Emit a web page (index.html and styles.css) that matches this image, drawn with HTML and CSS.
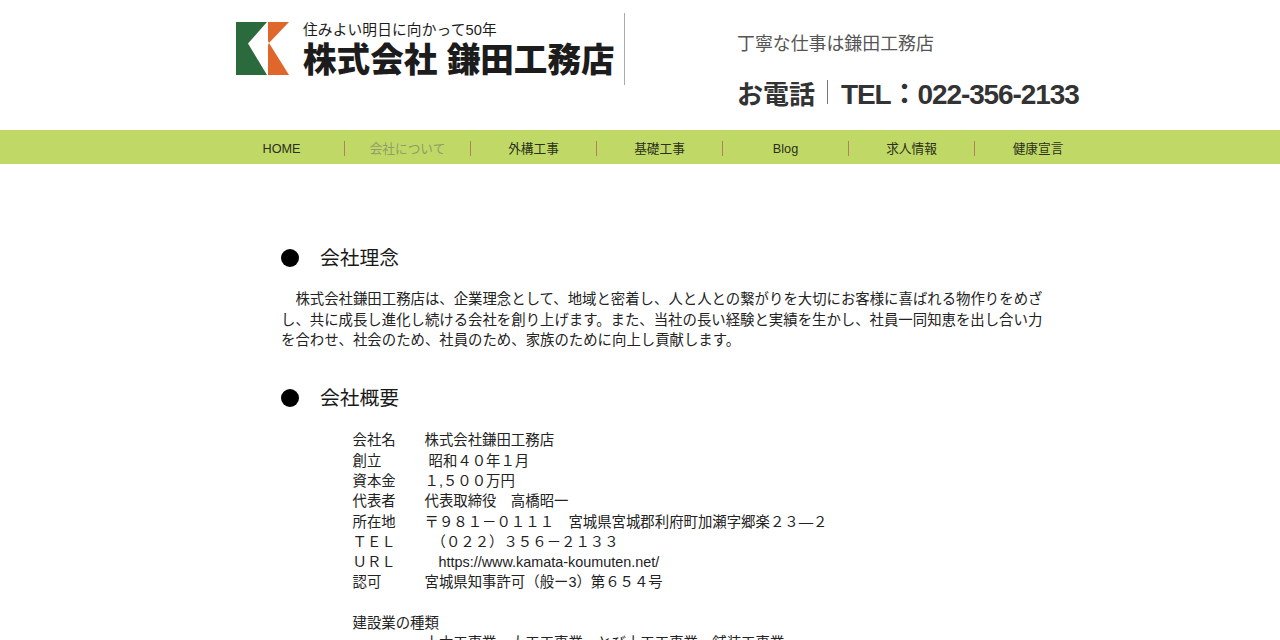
FILE: index.html
```html
<!DOCTYPE html>
<html lang="ja">
<head>
<meta charset="utf-8">
<title>株式会社鎌田工務店</title>
<link rel="stylesheet" href="styles.css">
</head>
<body>
<header class="site-header">
  <div class="logo">
    <svg class="logo-mark" viewBox="0 0 53 53" width="53" height="53" aria-hidden="true">
      <polygon points="0,0 31,0 12,21.500 31,53 0,53" fill="#2b6a3c"/>
      <polygon points="32,0 53,0 33,21 53,53 32,53 32,23 33,21 32,19" fill="#e0672c"/>
    </svg>
    <div class="logo-text">
      <div class="logo-tag">住みよい明日に向かって50年</div>
      <div class="logo-name">株式会社 鎌田工務店</div>
    </div>
  </div>
  <div class="contact">
    <p class="tagline">丁寧な仕事は鎌田工務店</p>
    <p class="phone"><span class="phone-label">お電話</span><span class="phone-sep"></span><span class="phone-num">TEL：022-356-2133</span></p>
  </div>
</header>
<nav class="nav">
  <ul class="nav-list">
    <li class="nav-item">HOME</li>
    <li class="nav-item is-current">会社について</li>
    <li class="nav-item">外構工事</li>
    <li class="nav-item">基礎工事</li>
    <li class="nav-item">Blog</li>
    <li class="nav-item">求人情報</li>
    <li class="nav-item">健康宣言</li>
  </ul>
</nav>
<main class="content">
  <h2 class="heading"><span class="dot"></span>会社理念</h2>
  <p class="lead">　株式会社鎌田工務店は、企業理念として、地域と密着し、人と人との繋がりを大切にお客様に喜ばれる物作りをめざし、共に成長し進化し続ける会社を創り上げます。また、当社の長い経験と実績を生かし、社員一同知恵を出し合い力を合わせ、社会のため、社員のため、家族のために向上し貢献します。</p>
  <h2 class="heading heading-second"><span class="dot"></span>会社概要</h2>
  <dl class="facts">
    <div class="fact"><dt>会社名</dt><dd>株式会社鎌田工務店</dd></div>
    <div class="fact"><dt>創立</dt><dd class="in-s">昭和４０年１月</dd></div>
    <div class="fact"><dt>資本金</dt><dd>１,５００万円</dd></div>
    <div class="fact"><dt>代表者</dt><dd>代表取締役　高橋昭一</dd></div>
    <div class="fact"><dt>所在地</dt><dd>〒９８１－０１１１　宮城県宮城郡利府町加瀬字郷楽２３―２</dd></div>
    <div class="fact"><dt>ＴＥＬ</dt><dd class="in-m">（０２２）３５６－２１３３</dd></div>
    <div class="fact"><dt>ＵＲＬ</dt><dd class="in-l">https://www.kamata-koumuten.net/</dd></div>
    <div class="fact"><dt>認可</dt><dd>宮城県知事許可（般ー3）第６５４号</dd></div>
  </dl>
  <h3 class="subhead">建設業の種類</h3>
  <p class="kinds">土木工事業、大工工事業、とび土工工事業、舗装工事業</p>
</main>
</body>
</html>
```
FILE: styles.css
```css
* { box-sizing: border-box; }
html, body { margin: 0; padding: 0; }
body {
  background: #fff;
  color: #222;
  font-family: "Liberation Sans", "Noto Sans CJK JP", sans-serif;
}
p, h2, h3, ul, dl, dd { margin: 0; padding: 0; }

.site-header {
  height: 130px;
  width: 1280px;
  padding-left: 236px;
  display: flex;
  align-items: flex-start;
}
.logo {
  width: 389px;
  height: 72px;
  margin-top: 13px;
  border-right: 1px solid #aaa;
  display: flex;
  align-items: flex-start;
  padding-top: 9px;
  gap: 14px;
}
.logo-mark { flex: none; }
.logo-text { color: #1c1c1c; }
.logo-tag { font-size: 14.700px; line-height: 16px; letter-spacing: 0.150px; }
.logo-name { font-size: 33.600px; font-weight: 900; line-height: 38px; margin-top: 4px; white-space: nowrap; }

.contact { margin-left: 112px; padding-top: 32px; }
.tagline { font-size: 17.900px; line-height: 24px; color: #555; }
.phone { display: flex; align-items: center; margin-top: 20px; color: #333; font-weight: 700; height: 32px; }
.phone-label { font-size: 26px; }
.phone-sep { width: 1px; height: 24px; background: #777; margin: 0 13px 0 12px; }
.phone-num { font-size: 28px; letter-spacing: -1.100px; white-space: nowrap; }

.nav { height: 34px; background: #c0d966; }
.nav-list {
  list-style: none;
  display: flex;
  padding-left: 219px;
  height: 34px;
  align-items: center;
}
.nav-item {
  width: 126px;
  height: 15px;
  margin-top: 3px;
  padding-top: 1px;
  font-size: 12.700px;
  line-height: 15px;
  text-align: center;
  color: #2b2f1c;
  border-right: 1px solid #b0805f;
  white-space: nowrap;
}
.nav-item:last-child { border-right: 0; }
.nav-item.is-current { color: #8f9d66; }

.content { padding: 81px 0 0 281px; width: 1046px; font-size: 14.400px; line-height: 20.300px; color: #222; }
.heading {
  display: flex;
  align-items: center;
  height: 26px;
  font-size: 19.800px;
  font-weight: 400;
  color: #1a1a1a;
}
.heading-second { margin-top: 34.700px; }
.dot { width: 18px; height: 18px; border-radius: 50%; background: #000; margin: 0 21px 0 0; }
.lead { margin-top: 18.300px; }
.facts { margin: 19.500px 0 0 71.500px; }
.fact { display: flex; white-space: nowrap; }
.fact dt { width: 72px; flex: none; }
.in-s { padding-left: 4px; }
.in-m { padding-left: 7px; }
.in-l { padding-left: 14px; }
.subhead { margin: 19.800px 0 0 71.500px; font-size: inherit; font-weight: 400; }
.kinds { margin-left: 143.500px; white-space: nowrap; }
```
